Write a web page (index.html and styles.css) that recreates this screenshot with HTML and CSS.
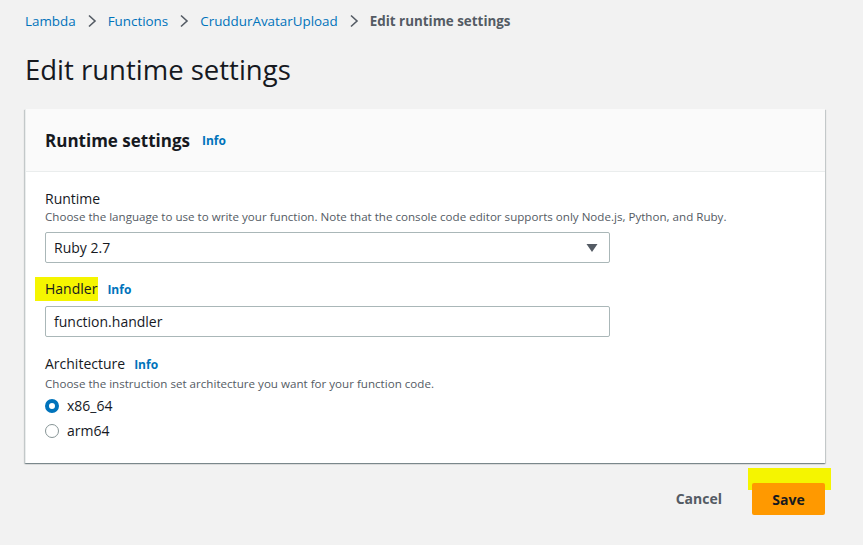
FILE: index.html
```html
<!DOCTYPE html>
<html>
<head>
<meta charset="utf-8">
<link rel="stylesheet" href="styles.css">
</head>
<body>
<div class="page">
  <nav class="crumbs">
    <a class="crumb">Lambda</a>
    <svg class="sep" width="10" height="14" viewBox="0 0 10 14"><path d="M2 1.5 L8 7 L2 12.5" fill="none" stroke="#545b64" stroke-width="1.6"/></svg>
    <a class="crumb">Functions</a>
    <svg class="sep" width="10" height="14" viewBox="0 0 10 14"><path d="M2 1.5 L8 7 L2 12.5" fill="none" stroke="#545b64" stroke-width="1.6"/></svg>
    <a class="crumb">CruddurAvatarUpload</a>
    <svg class="sep" width="10" height="14" viewBox="0 0 10 14"><path d="M2 1.5 L8 7 L2 12.5" fill="none" stroke="#545b64" stroke-width="1.6"/></svg>
    <span class="crumb-current">Edit runtime settings</span>
  </nav>
  <h1 class="title">Edit runtime settings</h1>

  <section class="card">
    <header class="card-head">
      <h2 class="card-title">Runtime settings</h2>
      <span class="info">Info</span>
    </header>
    <div class="card-body">
      <div class="field">
        <div class="label">Runtime</div>
        <div class="desc">Choose the language to use to write your function. Note that the console code editor supports only Node.js, Python, and Ruby.</div>
        <div class="select">
          <span>Ruby 2.7</span>
          <svg width="12" height="10" viewBox="0 0 12 10"><path d="M0.5 1 L11.5 1 L6 9 Z" fill="#545b64"/></svg>
        </div>
      </div>
      <div class="field handler-field">
        <div class="label-row"><span class="label hl">Handler</span><span class="info">Info</span></div>
        <div class="input">function.handler</div>
      </div>
      <div class="field arch-field">
        <div class="label-row"><span class="label">Architecture</span><span class="info">Info</span></div>
        <div class="desc">Choose the instruction set architecture you want for your function code.</div>
        <div class="radio-row"><span class="radio checked"></span><span>x86_64</span></div>
        <div class="radio-row"><span class="radio"></span><span>arm64</span></div>
      </div>
    </div>
  </section>

  <div class="actions">
    <span class="cancel">Cancel</span>
    <div class="save-wrap">
      <span class="save-hl"></span>
      <button class="save">Save</button>
    </div>
  </div>
</div>
</body>
</html>
```
FILE: styles.css
```css
* { box-sizing: border-box; }
html, body { margin: 0; padding: 0; }
body {
  background: #f2f2f2;
  font-family: "Open Sans", "Liberation Sans", sans-serif;
  color: #16191f;
  width: 863px;
  height: 545px;
  overflow: hidden;
}
.page {
  padding: 10px 38px 0 25px;
  display: flex;
  flex-direction: column;
}
.crumbs {
  display: flex;
  align-items: center;
  gap: 10px;
  height: 22px;
  font-size: 13.4px;
}
.crumb { color: #0073bb; }
.sep { margin: 0 1px; }
.crumb-current { color: #545b64; font-weight: 700; }
.title {
  margin: 20px 0 0 0;
  font-size: 27.5px;
  font-weight: 400;
  line-height: 36px;
  color: #16191f;
}
.card {
  margin-top: 21px;
  background: #fff;
  border-left: 1px solid #eaeded;
  box-shadow: 0 1px 1px 0 rgba(0,28,36,.3), 1px 1px 1px 0 rgba(0,28,36,.15), -1px 1px 1px 0 rgba(0,28,36,.15);
  height: 354px;
  display: flex;
  flex-direction: column;
}
.card-head {
  background: #fafafa;
  height: 63px;
  border-bottom: 1px solid #eaeded;
  display: flex;
  align-items: center;
  padding: 0 19px;
  gap: 12px;
}
.card-title {
  margin: 0;
  font-size: 17px;
  font-weight: 700;
  color: #16191f;
}
.info {
  color: #0073bb;
  font-size: 12px;
  font-weight: 700;
}
.card-body {
  padding: 17px 19px 0 19px;
  display: flex;
  flex-direction: column;
}
.label {
  font-size: 14px;
  line-height: 20px;
  color: #16191f;
}
.desc {
  font-size: 11.6px;
  line-height: 16px;
  color: #545b64;
}
.select, .input {
  width: 565px;
  height: 31px;
  border: 1px solid #aab7b8;
  border-radius: 2px;
  font-size: 14px;
  display: flex;
  align-items: center;
  padding: 0 8px;
  color: #16191f;
  background: #fff;
}
.select {
  margin-top: 7px;
  justify-content: space-between;
  padding-right: 11px;
}
.handler-field { margin-top: 14px; }
.label-row {
  display: flex;
  align-items: center;
  gap: 9px;
  height: 24px;
}
.hl {
  background: #f5f500;
  padding: 2px 1px 2px 10px;
  margin-left: -10px;
  line-height: 20px;
}
.handler-field .input { margin-top: 5px; }
.arch-field { margin-top: 15px; }
.arch-field .label-row { margin-bottom: 0; }
.radio-row {
  display: flex;
  align-items: center;
  gap: 8px;
  font-size: 14px;
  height: 25px;
  color: #16191f;
}
.arch-field .desc { margin-bottom: 1px; }
.radio {
  width: 14px;
  height: 14px;
  border-radius: 50%;
  border: 1px solid #879596;
  background: #fff;
}
.radio.checked {
  border: 4px solid #0073bb;
}
.actions {
  display: flex;
  justify-content: flex-end;
  align-items: flex-end;
  margin-top: 5px;
  gap: 30px;
}
.cancel {
  font-size: 14px;
  font-weight: 700;
  color: #545b64;
  margin-bottom: 7px;
}
.save-wrap {
  position: relative;
  padding-top: 15px;
}
.save-hl {
  position: absolute;
  left: -4px;
  top: 0;
  width: 83px;
  height: 22px;
  background: #f5f500;
}
.save {
  position: relative;
  width: 73px;
  height: 32px;
  background: #ff9900;
  border: none;
  border-radius: 2px;
  font-family: inherit;
  font-size: 14px;
  font-weight: 700;
  color: #16191f;
  padding: 0;
}
```
